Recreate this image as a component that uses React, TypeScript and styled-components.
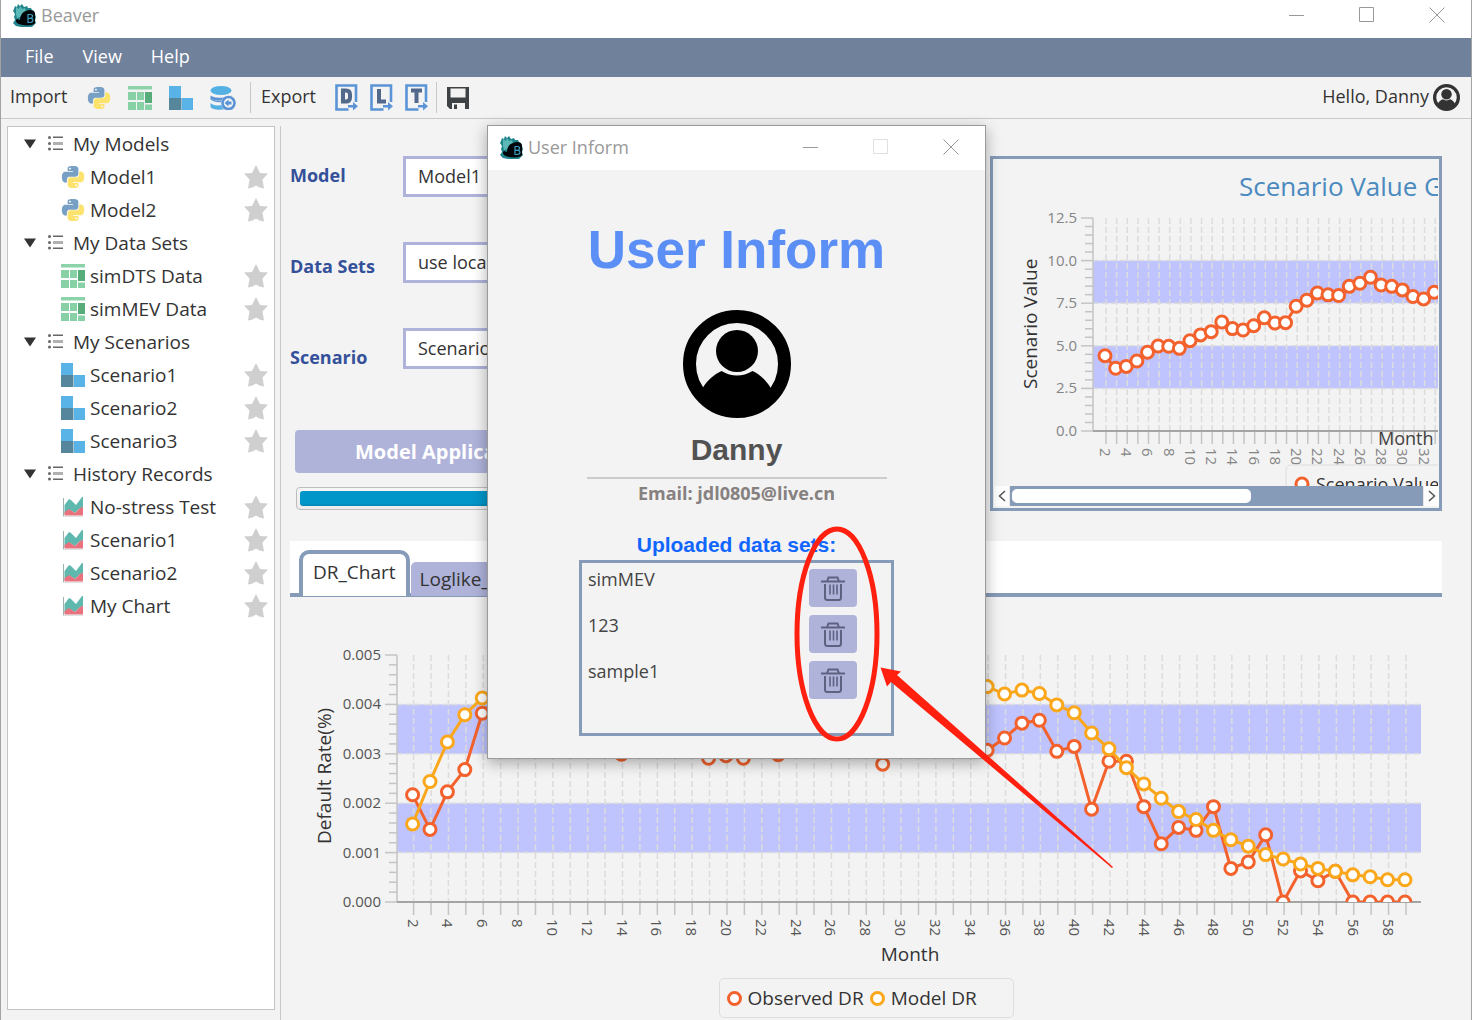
import React from "react";
import styled, { createGlobalStyle, css } from "styled-components";

const slate = "#859bb7";
const lilac = "#afb3da";
const band = "#bfc4ff";
const ink = "#333333";
const sans = '"Open Sans", "Noto Sans", sans-serif';
const arial = '"Liberation Sans", Arial, sans-serif';

const GlobalStyle = createGlobalStyle`
  *, *::before, *::after { box-sizing: border-box; }
  body { margin: 0; background: #f3f3f3; }
  button, select { font: inherit; color: inherit; }
  svg { display: block; flex: none; }
`;

/* ---------- window shell ---------- */

const Shell = styled.div`
  position: relative;
  display: flex;
  flex-direction: column;
  min-height: 100vh;
  overflow: hidden;
  border-left: 1px solid #a3a3a3;
  border-right: 1px solid #a3a3a3;
  background: #f3f3f3;
  color: ${ink};
  font: 18px/24px ${sans};
`;

const TitleBar = styled.header<{ $dialog?: boolean }>`
  display: flex;
  align-items: center;
  gap: 4px;
  height: ${(p) => (p.$dialog ? 44 : 38)}px;
  padding: ${(p) => (p.$dialog ? "0 26px 2px 12px" : "0 26px 8px 12px")};
  background: #ffffff;
  color: #999999;
`;

const Controls = styled.div`
  display: flex;
  gap: 54px;
  margin-left: auto;
`;

const BareButton = styled.button`
  display: grid;
  place-items: center;
  padding: 0;
  border: 0;
  background: none;
  cursor: pointer;
`;

const MenuBar = styled.nav`
  display: flex;
  align-items: center;
  gap: 29px;
  height: 39px;
  padding: 0 24px 4px;
  background: #70819b;
  color: #ffffff;
`;

const ToolBar = styled.div`
  display: flex;
  align-items: center;
  height: 42px;
  padding: 0 11px 0 9px;
  border-bottom: 1px solid #c8c8c8;
`;

const ToolGroup = styled.div<{ $gap: number }>`
  display: flex;
  align-items: center;
  gap: ${(p) => p.$gap}px;
`;

const ToolTitle = styled.span<{ $width?: number }>`
  width: ${(p) => (p.$width ? `${p.$width}px` : "auto")};
  padding-bottom: 4px;
`;

const Separator = styled.span<{ $before: number }>`
  width: 1px;
  height: 31px;
  margin: 0 10px 0 ${(p) => p.$before}px;
  background: #c8c8c8;
`;

const Greeting = styled.div`
  display: flex;
  align-items: center;
  gap: 4px;
  margin-left: auto;
`;

const Body = styled.div`
  display: flex;
  flex: 1;
`;

/* ---------- tree ---------- */

const Side = styled.aside`
  display: flex;
  width: 280px;
  margin-top: 7px;
  padding: 0 5px 10px 6px;
  border-right: 1px solid #c8c8c8;
`;

const Tree = styled.ul`
  flex: 1;
  margin: 0;
  padding: 0;
  border: 1px solid #c4c4c4;
  background: #ffffff;
  font-size: 19px;
  list-style: none;
`;

const SubTree = styled.ul`
  margin: 0;
  padding: 0;
  list-style: none;
`;

const Row = styled.div<{ $leaf?: boolean }>`
  display: flex;
  align-items: center;
  gap: ${(p) => (p.$leaf ? 5 : 10)}px;
  height: 33px;
  padding: ${(p) => (p.$leaf ? "0 6px 0 53px" : "0 6px 0 15px")};
`;

const Grow = styled.span`
  flex: 1;
`;

/* ---------- main area ---------- */

const Main = styled.main`
  flex: 1;
  min-width: 0;
  padding: 37px 29px 2px 9px;
`;

const Upper = styled.div`
  display: flex;
  justify-content: space-between;
  height: 355px;
  margin-bottom: 30px;
`;

const Form = styled.form`
  width: 640px;
`;

const Fields = styled.div`
  display: flex;
  height: 274px;
`;

const Stack = styled.div<{ $gap: number; $top?: number; $width: number }>`
  display: flex;
  flex-direction: column;
  gap: ${(p) => p.$gap}px;
  width: ${(p) => p.$width}px;
  padding-top: ${(p) => p.$top ?? 0}px;
`;

const Label = styled.label`
  color: #34509a;
  font-weight: 700;
`;

const Select = styled.select`
  height: 41px;
  padding: 0 12px 2px;
  border: 3px solid ${lilac};
  border-radius: 0;
  background: #ffffff;
  appearance: none;
`;

const ApplyButton = styled.button`
  display: block;
  height: 43px;
  margin: 0 5px 14px;
  padding: 0 60px;
  border: 0;
  border-radius: 4px;
  background: ${lilac};
  color: #ffffff;
  font-size: 20px;
  font-weight: 700;
`;

const Progress = styled.div`
  height: 23px;
  margin-left: 6px;
  padding: 3px;
  border: 1px solid #bdbdbd;
  border-radius: 4px;
  background: linear-gradient(#f6f6f6, #ebebeb);
`;

const ProgressFill = styled.div`
  height: 100%;
  border-radius: 3px;
  background: linear-gradient(#0096c9 80%, #0087b4);
`;

const ScenarioPanel = styled.section`
  display: flex;
  flex-direction: column;
  width: 452px;
  border: 3px solid ${slate};
`;

const ScenarioView = styled.div`
  flex: 1;
  margin-right: 1px;
  overflow: hidden;
`;

const ScrollBar = styled.div`
  display: grid;
  grid-template-columns: 15px 1fr 15px;
  gap: 1px;
  height: 20px;
  margin-bottom: 2px;
  padding-left: 1px;
  background: #e8e8e8;
`;

const ScrollArrow = styled(BareButton)`
  background: #fdfdfd;
`;

const ScrollTrack = styled.div`
  padding: 3px 2px;
  background: ${slate};
`;

const ScrollThumb = styled.div`
  height: 14px;
  border-radius: 5px;
  background: #ffffff;
`;

const TabStrip = styled.div`
  display: flex;
  align-items: flex-end;
  gap: 1px;
  height: 56px;
  padding: 0 9px 1px;
  background: #ffffff;
  box-shadow: inset 0 -4px ${slate};
`;

const Tab = styled.button<{ $active?: boolean }>`
  height: 34px;
  padding: 0 9px;
  border: 0;
  border-radius: 5px 5px 0 0;
  background: ${lilac};
  font-size: 19px;
  ${(p) =>
    p.$active &&
    css`
      height: 46px;
      padding: 0 10px 6px;
      border: 4px solid ${slate};
      border-bottom: 0;
      border-radius: 10px 10px 0 0;
      background: #ffffff;
    `}
`;

const MainChart = styled.svg`
  width: 100%;
  height: auto;
`;

const Legend = styled.div`
  display: flex;
  align-items: center;
  gap: 6px;
  width: 295px;
  height: 40px;
  margin: 0 auto;
  padding: 0 7px;
  border: 1px solid #dddddd;
  border-radius: 5px;
  font-size: 19px;
`;

const LegendItem = styled.span<{ $color: string }>`
  display: flex;
  align-items: center;
  gap: 6px;

  &::before {
    content: "";
    width: 15px;
    height: 15px;
    border: 3px solid ${(p) => p.$color};
    border-radius: 50%;
    background: #ffffff;
  }
`;

/* ---------- dialog ---------- */

const Dialog = styled.section`
  position: absolute;
  top: 125px;
  left: 486px;
  width: 499px;
  height: 634px;
  border: 1px solid #9a9a9a;
  background: #f3f3f3;
  box-shadow: 0 4px 14px rgba(0, 0, 0, 0.32);
`;

const DialogBody = styled.div`
  display: flex;
  flex-direction: column;
  align-items: center;
  padding-top: 50px;
`;

const Heading = styled.h1`
  margin: 0 0 30px;
  color: #5b8ff5;
  font: 700 53px/60px ${arial};
`;

const UserName = styled.h2`
  width: 300px;
  margin: 10px 0 2px;
  padding: 4px 0 9px;
  border-bottom: 2px solid #cccccc;
  color: #525252;
  font: 700 30px/36px ${arial};
  text-align: center;
`;

const Email = styled.p`
  margin: 0 0 26px;
  color: #868180;
  font-size: 18px;
  font-weight: 700;
`;

const ListTitle = styled.h3`
  margin: 0 0 1px;
  color: #1066ff;
  font: 700 21px/28px ${arial};
`;

const DataList = styled.ul`
  display: flex;
  flex-direction: column;
  gap: 8px;
  width: 315px;
  height: 176px;
  margin: 0;
  padding: 6px 34px 0 6px;
  border: 3px solid ${slate};
  list-style: none;
`;

const DataItem = styled.li`
  display: flex;
  align-items: flex-start;
  justify-content: space-between;
  color: #444444;
  line-height: 20px;
`;

const DeleteButton = styled(BareButton)`
  width: 48px;
  height: 38px;
  border-radius: 4px;
  background: ${lilac};
`;

const Annotation = styled.svg`
  position: absolute;
  top: 0;
  left: -1px;
  pointer-events: none;
`;

/* ---------- icons ---------- */

const BeaverLogo = () => (
  <svg width="24" height="24" viewBox="0 0 24 24" aria-hidden="true">
    <path d="M2 3l2 1 1-3 2 2 2-2 2 3 3-1 1 2 3 0 1 2 2 1 1 3 1 3-1 3 1 3-2 2-2 2-5 1-6-1-5-1-3-3 2-3-1-3 1-3-2-3 1-2z" fill="#23858c" />
    <path d="M3 4l3 2 1-3 2 3 3-1 1 4-5 5-4 1-1-4z" fill="#5db9b7" />
    <path d="M13 8c4-2 8-1 9 2v10c-1 3-12 3-16 1-3-1-4-4-2-5l3 1c0-4 2-8 6-9z" fill="#020608" />
    <path d="M15 19.500V11.500h2.500q2 0 2 1.800t-2 2H15h3q2 .2 2 2t-2.500 2.200z" fill="none" stroke="#3d9fc0" strokeWidth="1.200" />
  </svg>
);

const PythonIcon = () => (
  <svg width="24" height="24" viewBox="-1 -1 26 26" aria-hidden="true">
    <path
      fill="#77a0c4"
      d="M14.250.18l.9.2.73.26.59.3.45.32.34.34.25.34.16.33.1.3.04.26.02.2-.01.13V8.5l-.05.63-.13.55-.21.46-.26.38-.3.31-.33.25-.35.19-.35.14-.33.1-.3.07-.26.04-.21.02H8.770l-.69.05-.59.14-.5.22-.41.27-.33.32-.27.35-.2.36-.15.37-.1.35-.07.32-.04.27-.02.21v3.060H3.170l-.21-.03-.28-.07-.32-.12-.35-.18-.36-.26-.36-.36-.35-.46-.32-.59-.28-.73-.21-.88-.14-1.050-.05-1.230.06-1.220.16-1.040.24-.87.32-.71.36-.57.4-.44.42-.33.42-.24.4-.16.36-.1.32-.05.24-.01h.16l.06.01h8.160v-.83H6.180l-.01-2.750-.02-.37.05-.34.11-.31.17-.28.25-.26.31-.23.38-.2.44-.18.51-.15.58-.12.64-.1.71-.06.77-.04.84-.02 1.270.05zm-6.300 1.980l-.23.33-.08.41.08.41.23.34.33.22.41.09.41-.09.33-.22.23-.34.08-.41-.08-.41-.23-.33-.33-.22-.41-.09-.41.09z"
    />
    <path
      fill="#fde26d"
      d="M21.100 6.110l.28.06.32.12.35.18.36.27.36.35.35.47.32.59.28.73.21.88.14 1.040.05 1.230-.06 1.230-.16 1.040-.24.86-.32.71-.36.57-.4.45-.42.33-.42.24-.4.16-.36.09-.32.05-.24.02-.16-.01h-8.220v.82h5.840l.01 2.760.02.36-.05.34-.11.31-.17.29-.25.25-.31.24-.38.2-.44.17-.51.15-.58.13-.64.09-.71.07-.77.04-.84.01-1.270-.04-1.070-.14-.9-.2-.73-.25-.59-.3-.45-.33-.34-.34-.25-.34-.16-.33-.1-.3-.04-.25-.02-.2.01-.13v-5.340l.05-.64.13-.54.21-.46.26-.38.3-.32.33-.24.35-.2.35-.14.33-.1.3-.06.26-.04.21-.02.13-.01h5.840l.69-.05.59-.14.5-.21.41-.28.33-.32.27-.35.2-.36.15-.36.1-.35.07-.32.04-.28.02-.21V6.070h2.090l.14.01zm-6.470 14.250l-.23.33-.08.41.08.41.23.33.33.23.41.08.41-.08.33-.23.23-.33.08-.41-.08-.41-.23-.33-.33-.23-.41-.08-.41.08z"
    />
  </svg>
);

const SheetIcon = () => (
  <svg width="24" height="24" viewBox="0 0 24 24" aria-hidden="true">
    <path fill="#8dd3aa" d="M0 0h24v3.500H0z" />
    <path fill="#88d1a6" d="M0 6h8v8H0zM9 6h7v8H9zM0 16h8v8H0zM9 16h7v8H9zM17 18.500h7V24h-7z" />
    <path fill="#56ad79" d="M17 6h7v11h-7z" />
  </svg>
);

const BlocksIcon = () => (
  <svg width="24" height="24" viewBox="0 0 24 24" aria-hidden="true">
    <path fill="#59b3e6" d="M0 0h12v12H0zM13 12h11v12H13z" />
    <path fill="#55869c" d="M0 12h12.500v12H0z" />
  </svg>
);

const AreaIcon = () => (
  <svg width="24" height="24" viewBox="0 0 24 24" aria-hidden="true">
    <path d="M2.500 3v18.500" fill="none" stroke="#9fb0b0" />
    <path d="M2.500 21.500h19.500" fill="none" stroke="#dde2e2" />
    <path fill="#5fb8ae" d="M3.500 10l4.500-6 2 1 5 5 6-8h1v10l-4 2-4 4-5-3-5.500 4z" />
    <path fill="#e8737f" d="M3.500 17l4.500-3 6 4 5-5 3-1v8.500H3.500z" />
  </svg>
);

const DatabaseIcon = () => (
  <svg width="26" height="24" viewBox="0 0 26 24" aria-hidden="true">
    <ellipse cx="11" cy="4.500" rx="10.500" ry="4.500" fill="#55b0e4" />
    <path fill="#5c93d6" d="M.5 9.500c3 3 17 3 21 0v3c-4 2.500-17 3-21 0z" />
    <path fill="#5c93d6" d="M.5 12c2 2.500 7 3 12 2.500v1.500c-5 .5-10-.5-12-2.500z" />
    <path fill="#55b0e4" d="M.5 17c2 2 6 3 11 2 1 2 2 3.500 4 4-6 1.500-15 .5-15-2.500z" />
    <circle cx="18.500" cy="17" r="7.500" fill="#f3f3f3" />
    <circle cx="18.500" cy="17" r="6" fill="none" stroke="#5c93d6" strokeWidth="2.600" />
    <path fill="#5c93d6" d="M14.500 17l4-3.500v2h3v3h-3v2z" />
  </svg>
);

const letterShapes: Record<string, React.ReactNode> = {
  D: <path d="M8 6.500v11h3q4 0 4-4v-3q0-4-4-4z" />,
  L: <path d="M9 5v12.500h7" />,
  T: <path d="M6 6.500h11M11.500 6.500V19" />,
};

const ExportIcon = ({ kind }: { kind: string }) => (
  <svg width="23" height="27" viewBox="0 0 23 27" aria-hidden="true">
    <path d="M21 18V1.500H1.500v24h12" fill="none" stroke="#5b94d6" strokeWidth="2.600" />
    <g fill="none" stroke="#53698b" strokeWidth="4">{letterShapes[kind]}</g>
    <path fill="#5b94d6" d="M13 21h5v-3l5 4.200-5 4.300v-3h-5z" />
  </svg>
);

const SaveIcon = () => (
  <svg width="22" height="22" viewBox="0 0 22 22" aria-hidden="true">
    <path fill="#3f4244" fillRule="evenodd" d="M0 0h22v22H18v-6H5v6H3l-3-3zM3.500 1.500v9h15v-9z" />
    <path fill="#3f4244" d="M7 17.500h3V22H7z" />
  </svg>
);

const PersonIcon = ({ size, color }: { size: number; color: string }) => (
  <svg width={size} height={size} viewBox="0 0 108 108" aria-hidden="true">
    <circle cx="54" cy="54" r="47.500" fill="none" stroke={color} strokeWidth="13" />
    <circle cx="54" cy="41" r="21" fill={color} />
    <path fill={color} d="M20 77.500c4-7 11-13 18.500-16.500q15.500 9 31 0c7.500 3.500 14 9.500 18.500 17.500-10 22-58 26-68-1z" />
  </svg>
);

const ListIcon = () => (
  <svg width="16" height="15" viewBox="-1 0 16 15" aria-hidden="true">
    <g fill="#666666">
      <circle cx="1.500" cy="1.500" r="1.500" />
      <circle cx="1.500" cy="7.500" r="1.500" />
      <circle cx="1.500" cy="13" r="1.500" />
      <path d="M5 .5h10v1.500H5zM5 12.500h10V14H5z" />
    </g>
    <path fill="#b0b0b0" d="M5 6h10v3H5z" />
  </svg>
);

const CaretIcon = () => (
  <svg width="14" height="10" viewBox="0 0 14 10" aria-hidden="true">
    <path fill="#333333" d="M1 .5h12L7 9.500z" />
  </svg>
);

const StarIcon = () => (
  <svg width="24" height="24" viewBox="0 0 24 24" aria-hidden="true">
    <path fill="#cfcfcf" d="M12 0l4 8 8 .5-5.500 6L20 23.500l-4.500-1-3.500-2-3.500 2-4.500 1L5.500 14.500 0 8.500 8 8z" />
  </svg>
);

const TrashIcon = () => (
  <svg width="24" height="25" viewBox="0 0 24 25" aria-hidden="true">
    <g fill="none" stroke="#5e6180" strokeWidth="2">
      <path d="M0 5.500h24" />
      <path d="M6 5.500l1.500-4h9L18 5.500M4 8v13.500q0 2.500 2.500 2.500h11q2.500 0 2.500-2.500V8" />
      <path d="M9 8.500v10M12.500 8.500v10M16 8.500v10" strokeWidth="1.600" />
    </g>
  </svg>
);

const WindowControls = ({ faded }: { faded?: boolean }) => (
  <Controls>
    <BareButton type="button" aria-label="Minimize">
      <svg width="16" height="16"><path d="M0 8.500h15" stroke="#999999" /></svg>
    </BareButton>
    <BareButton type="button" aria-label="Maximize">
      <svg width="16" height="16">
        <path d="M.5.5h14v14H.5z" fill="none" stroke={faded ? "#e0e0e0" : "#999999"} />
      </svg>
    </BareButton>
    <BareButton type="button" aria-label="Close">
      <svg width="16" height="16"><path d="M.5.5l15 15M15.500.5l-15 15" stroke="#999999" /></svg>
    </BareButton>
  </Controls>
);

/* ---------- data ---------- */

const groups = [
  { name: "My Models", Icon: PythonIcon, items: ["Model1", "Model2"] },
  { name: "My Data Sets", Icon: SheetIcon, items: ["simDTS Data", "simMEV Data"] },
  { name: "My Scenarios", Icon: BlocksIcon, items: ["Scenario1", "Scenario2", "Scenario3"] },
  { name: "History Records", Icon: AreaIcon, items: ["No-stress Test", "Scenario1", "Scenario2", "My Chart"] },
];

const fields = [
  { id: "model", label: "Model", value: "Model1" },
  { id: "datasets", label: "Data Sets", value: "use local data" },
  { id: "scenario", label: "Scenario", value: "Scenario1" },
];

// Default rates in units of 0.00001, from month 2 on.
const observed = [
  217, 147, 223, 268, 382, 420, 395, 360, 340, 330, 325, 315, 299, 325, 306, 330, 330, 291, 296, 291,
  320, 298, 330, 340, 340, 340, 340, 279, 340, 340, 340, 340, 330, 307, 332, 362, 368, 305, 315, 188,
  285, 285, 193, 118, 151, 145, 193, 68, 81, 136, 0, 63, 43, 62, 0, 0, 0, 0,
];
const modelled = [
  158, 244, 324, 379, 413, 430, 440, 445, 450, 450, 450, 450, 450, 450, 450, 450, 450, 450, 450, 450,
  450, 450, 450, 450, 450, 450, 450, 450, 450, 450, 450, 448, 444, 436, 421, 429, 422, 399, 383, 342,
  310, 272, 239, 210, 183, 167, 145, 126, 113, 96, 87, 77, 68, 62, 55, 51, 45, 45,
];
const scenarioValues = [
  4.42, 3.68, 3.79, 4.11, 4.62, 4.99, 4.97, 4.85, 5.3, 5.64, 5.83, 6.4, 6.01, 5.93, 6.18, 6.64, 6.34,
  6.36, 7.32, 7.67, 8.1, 7.99, 7.95, 8.49, 8.67, 9.02, 8.57, 8.49, 8.28, 7.89, 7.75, 8.14, 8.4,
];

/* ---------- charts ---------- */

type PlotProps = {
  id: string;
  left: number;
  right: number;
  top: number;
  bottom: number;
  firstX: number;
  stepX: number;
  labels: string[];
  labelColor: string;
  tickTop: number;
  max: number;
  series: { color: string; values: number[] }[];
};

const Plot = (p: PlotProps) => {
  const n = p.labels.length - 1;
  const stepY = (p.bottom - p.top) / n;
  const y = (v: number) => p.bottom - (v / p.max) * (p.bottom - p.top);
  const x = (i: number) => p.firstX + i * p.stepX;
  const months = p.series[0].values.map((_, i) => i);
  return (
    <g>
      <clipPath id={p.id}>
        <rect x={p.left} y={0} width={p.right - p.left} height={p.bottom} />
      </clipPath>
      {[1, 3].map((k) => (
        <rect key={k} x={p.left} y={p.top + k * stepY} width={p.right - p.left} height={stepY} fill={band} />
      ))}
      <g stroke="#dcdcdc" strokeWidth="1.500" strokeDasharray="6 3">
        {p.labels.slice(1).map((_, k) => (
          <path key={k} d={`M${p.left} ${p.top + (k + 1) * stepY}H${p.right}`} opacity={k === n - 1 ? 0 : 1} />
        ))}
        {months.map((i) => (
          <path key={i} d={`M${x(i) + 1} ${p.top}V${p.bottom}`} />
        ))}
      </g>
      <g stroke="#c4c4c4" strokeWidth="1.500">
        <path d={`M${p.left} ${p.top}V${p.bottom}`} />
        {Array.from({ length: n * 5 + 1 }, (_, k) => (
          <path key={k} d={`M${p.left - (k % 5 ? 8 : 12)} ${p.top + (k * stepY) / 5}H${p.left}`} />
        ))}
        {months.map((i) => (
          <path key={i} d={`M${x(i) + 1} ${p.bottom}v13`} />
        ))}
        <path d={`M${p.left} ${p.bottom}H${p.right}`} stroke="#a4a4a4" strokeWidth="2" />
      </g>
      <g fill={p.labelColor} fontSize="15">
        {p.labels.map((t, k) => (
          <text key={t} x={p.left - 16} y={p.top + k * stepY + 5} textAnchor="end">{t}</text>
        ))}
        {months.filter((i) => i % 2 === 0).map((i) => (
          <text key={i} transform={`translate(${x(i) - 5} ${p.tickTop}) rotate(90)`}>{i + 2}</text>
        ))}
      </g>
      <g clipPath={`url(#${p.id})`}>
        {p.series.map((s) => (
          <g key={s.color} stroke={s.color} strokeWidth="3" fill="none">
            <polyline points={s.values.map((v, i) => `${x(i)},${y(v)}`).join(" ")} />
            {s.values.map((v, i) => (
              <circle key={i} cx={x(i)} cy={y(v)} r="6" fill="#ffffff" />
            ))}
          </g>
        ))}
      </g>
    </g>
  );
};

const ScenarioChart = () => (
  <svg width="700" height="327" viewBox="0 0 700 327" fontFamily={sans}>
    <text x="246" y="37" fontSize="26" fill="#4a8abf">Scenario Value Graph</text>
    <Plot
      id="scenario-clip" left={100} right={660} top={59} bottom={272} firstX={112} stepX={10.62}
      labels={["12.5", "10.0", "7.5", "5.0", "2.5", "0.0"]} labelColor="#858585" tickTop={289} max={12.5}
      series={[{ color: "#f3622d", values: scenarioValues }]}
    />
    <text transform="translate(44 230) rotate(-90)" fontSize="19" fill={ink}>Scenario Value</text>
    <text x="385" y="286" fontSize="18" fill="#444444">Month</text>
    <rect x="293" y="306" width="160" height="40" rx="5" fill="#f3f3f3" stroke="#dddddd" />
    <circle cx="309" cy="325" r="6" fill="#ffffff" stroke="#f3622d" strokeWidth="3" />
    <text x="323" y="332" fontSize="18" fill={ink}>Scenario Value</text>
  </svg>
);

const RateChart = () => (
  <MainChart viewBox="0 0 1152 381" fontFamily={sans} role="img" aria-label="Default rate by month">
    <Plot
      id="rate-clip" left={107} right={1131} top={58} bottom={305} firstX={122.6} stepX={17.41}
      labels={["0.005", "0.004", "0.003", "0.002", "0.001", "0.000"]} labelColor="#555555" tickTop={322} max={500}
      series={[{ color: "#f3622d", values: observed }, { color: "#fba71b", values: modelled }]}
    />
    <text transform="translate(41 247) rotate(-90)" fontSize="19" fill={ink}>Default Rate(%)</text>
    <text x="620" y="364" fontSize="19" fill={ink} textAnchor="middle">Month</text>
  </MainChart>
);

/* ---------- page ---------- */

export default function App() {
  return (
    <Shell>
      <GlobalStyle />
      <TitleBar>
        <BeaverLogo />
        Beaver
        <WindowControls />
      </TitleBar>
      <MenuBar>
        {["File", "View", "Help"].map((m) => (
          <BareButton key={m} type="button">{m}</BareButton>
        ))}
      </MenuBar>
      <ToolBar>
        <ToolTitle $width={77}>Import</ToolTitle>
        <ToolGroup $gap={17}>
          {[PythonIcon, SheetIcon, BlocksIcon, DatabaseIcon].map((Icon, i) => (
            <BareButton key={i} type="button" aria-label={["Import model", "Import data", "Import scenario", "Import records"][i]}>
              <Icon />
            </BareButton>
          ))}
        </ToolGroup>
        <Separator $before={14} />
        <ToolTitle $width={74}>Export</ToolTitle>
        <ToolGroup $gap={12}>
          {["D", "L", "T"].map((k) => (
            <BareButton key={k} type="button" aria-label={`Export ${k}`}>
              <ExportIcon kind={k} />
            </BareButton>
          ))}
        </ToolGroup>
        <Separator $before={8} />
        <BareButton type="button" aria-label="Save"><SaveIcon /></BareButton>
        <Greeting>
          <ToolTitle>Hello, Danny</ToolTitle>
          <PersonIcon size={27} color="#333333" />
        </Greeting>
      </ToolBar>

      <Body>
        <Side>
          <Tree>
            {groups.map(({ name, Icon, items }) => (
              <li key={name}>
                <Row><CaretIcon /><ListIcon />{name}</Row>
                <SubTree>
                  {items.map((item) => (
                    <li key={item}>
                      <Row $leaf>
                        <Icon />
                        <Grow>{item}</Grow>
                        <BareButton type="button" aria-label={`Star ${item}`}><StarIcon /></BareButton>
                      </Row>
                    </li>
                  ))}
                </SubTree>
              </li>
            ))}
          </Tree>
        </Side>

        <Main>
          <Upper>
            <Form>
              <Fields>
                <Stack $gap={67} $top={7} $width={113}>
                  {fields.map((f) => <Label key={f.id} htmlFor={f.id}>{f.label}</Label>)}
                </Stack>
                <Stack $gap={45} $width={280}>
                  {fields.map((f) => (
                    <Select key={f.id} id={f.id} defaultValue={f.value}>
                      <option>{f.value}</option>
                    </Select>
                  ))}
                </Stack>
              </Fields>
              <ApplyButton type="button">Model Application</ApplyButton>
              <Progress role="progressbar" aria-valuenow={100} aria-label="Progress">
                <ProgressFill />
              </Progress>
            </Form>
            <ScenarioPanel>
              <ScenarioView><ScenarioChart /></ScenarioView>
              <ScrollBar>
                <ScrollArrow type="button" aria-label="Scroll left">
                  <svg width="8" height="12"><path d="M7 1L1.500 6 7 11" fill="none" stroke="#555555" strokeWidth="1.500" /></svg>
                </ScrollArrow>
                <ScrollTrack><ScrollThumb style={{ width: `${(24 / 41) * 100}%` }} /></ScrollTrack>
                <ScrollArrow type="button" aria-label="Scroll right">
                  <svg width="8" height="12"><path d="M1 1l5.500 5L1 11" fill="none" stroke="#555555" strokeWidth="1.500" /></svg>
                </ScrollArrow>
              </ScrollBar>
            </ScenarioPanel>
          </Upper>
          <TabStrip role="tablist">
            <Tab type="button" role="tab" $active>DR_Chart</Tab>
            <Tab type="button" role="tab">Loglike_Chart</Tab>
          </TabStrip>
          <RateChart />
          <Legend>
            <LegendItem $color="#f3622d">Observed DR</LegendItem>
            <LegendItem $color="#fba71b">Model DR</LegendItem>
          </Legend>
        </Main>
      </Body>

      <Dialog role="dialog" aria-label="User Inform">
        <TitleBar $dialog>
          <BeaverLogo />
          User Inform
          <WindowControls faded />
        </TitleBar>
        <DialogBody>
          <Heading>User Inform</Heading>
          <PersonIcon size={108} color="#000000" />
          <UserName>Danny</UserName>
          <Email>Email: jdl0805@live.cn</Email>
          <ListTitle>Uploaded data sets:</ListTitle>
          <DataList>
            {["simMEV", "123", "sample1"].map((d) => (
              <DataItem key={d}>
                {d}
                <DeleteButton type="button" aria-label={`Delete ${d}`}><TrashIcon /></DeleteButton>
              </DataItem>
            ))}
          </DataList>
        </DialogBody>
      </Dialog>

      <Annotation width="1200" height="900" aria-hidden="true">
        <ellipse cx="837" cy="634" rx="40" ry="105" fill="none" stroke="#ff2010" strokeWidth="5" />
        <path fill="#ff2010" d="M880.500 667.500L901 671.500 897 675 1113 867 1112 868 891 682 887 686.500z" />
      </Annotation>
    </Shell>
  );
}
